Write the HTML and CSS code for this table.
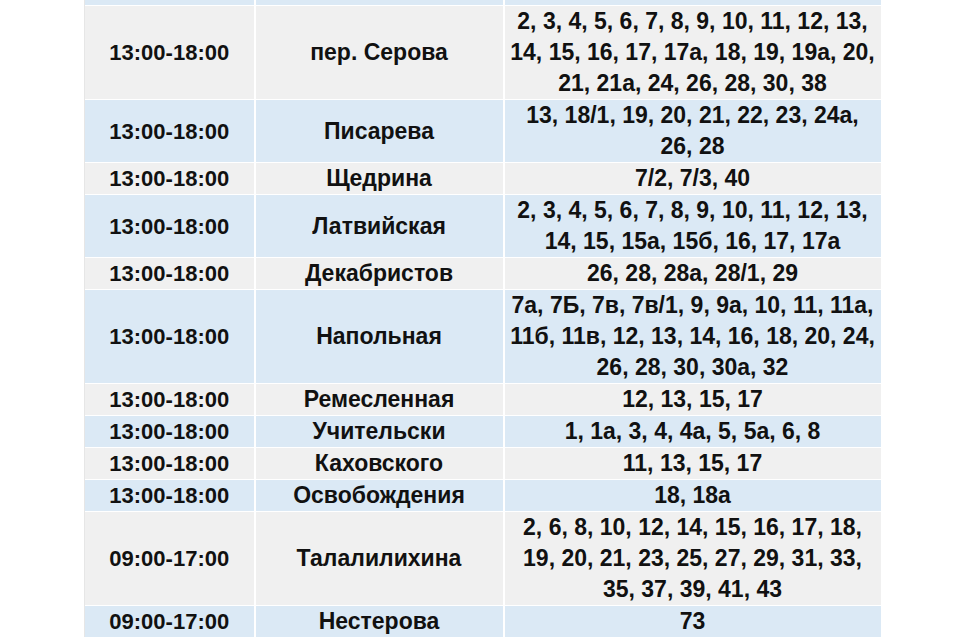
FILE: index.html
```html
<!DOCTYPE html>
<html lang="ru">
<head>
<meta charset="utf-8">
<link rel="stylesheet" href="styles.css">
</head>
<body>
<div class="wrap">
<table class="sched">
<colgroup><col class="c1"><col class="c2"><col class="c3"></colgroup>
<tbody>
<tr class="blue strip"><td></td><td></td><td></td></tr>
<tr class="gray"><td>13:00-18:00</td><td>пер. Серова</td><td>2, 3, 4, 5, 6, 7, 8, 9, 10, 11, 12, 13,<br>14, 15, 16, 17, 17а, 18, 19, 19а, 20,<br>21, 21а, 24, 26, 28, 30, 38</td></tr>
<tr class="blue"><td>13:00-18:00</td><td>Писарева</td><td>13, 18/1, 19, 20, 21, 22, 23, 24а,<br>26, 28</td></tr>
<tr class="gray"><td>13:00-18:00</td><td>Щедрина</td><td>7/2, 7/3, 40</td></tr>
<tr class="blue"><td>13:00-18:00</td><td>Латвийская</td><td>2, 3, 4, 5, 6, 7, 8, 9, 10, 11, 12, 13,<br>14, 15, 15а, 15б, 16, 17, 17а</td></tr>
<tr class="gray"><td>13:00-18:00</td><td>Декабристов</td><td>26, 28, 28а, 28/1, 29</td></tr>
<tr class="blue"><td>13:00-18:00</td><td>Напольная</td><td>7а, 7Б, 7в, 7в/1, 9, 9а, 10, 11, 11а,<br>11б, 11в, 12, 13, 14, 16, 18, 20, 24,<br>26, 28, 30, 30а, 32</td></tr>
<tr class="gray"><td>13:00-18:00</td><td>Ремесленная</td><td>12, 13, 15, 17</td></tr>
<tr class="blue"><td>13:00-18:00</td><td>Учительски</td><td>1, 1а, 3, 4, 4а, 5, 5а, 6, 8</td></tr>
<tr class="gray"><td>13:00-18:00</td><td>Каховского</td><td>11, 13, 15, 17</td></tr>
<tr class="blue"><td>13:00-18:00</td><td>Освобождения</td><td>18, 18а</td></tr>
<tr class="gray"><td>09:00-17:00</td><td>Талалилихина</td><td>2, 6, 8, 10, 12, 14, 15, 16, 17, 18,<br>19, 20, 21, 23, 25, 27, 29, 31, 33,<br>35, 37, 39, 41, 43</td></tr>
<tr class="blue"><td>09:00-17:00</td><td>Нестерова</td><td>73</td></tr>
</tbody>
</table>
</div>
</body>
</html>
```
FILE: styles.css
```css
html, body {
  margin: 0;
  padding: 0;
  background: #ffffff;
}
.wrap {
  width: 960px;
  height: 640px;
  overflow: hidden;
}
.sched {
  margin: 0 0 0 84px;
  width: 796px;
  border-collapse: collapse;
  table-layout: fixed;
  font-family: "Liberation Sans", Arial, sans-serif;
  font-weight: bold;
  font-size: 23px;
  line-height: 31px;
  color: #111111;
}
.c1 { width: 170px; }
.c2 { width: 249px; }
.c3 { width: 377px; }
.sched td {
  padding: 0;
  text-align: center;
  vertical-align: middle;
  border-top: 1px solid #ffffff;
  border-left: 2px solid #ffffff;
  white-space: nowrap;
}
.sched td:first-child {
  border-left: 1px solid #e6e6e6;
  font-size: 22px;
}
.sched .strip td {
  height: 5px;
  line-height: 0;
  border-top: 0;
}
.gray td { background: #f0f0f0; }
.blue td { background: #dbe9f5; }
```
